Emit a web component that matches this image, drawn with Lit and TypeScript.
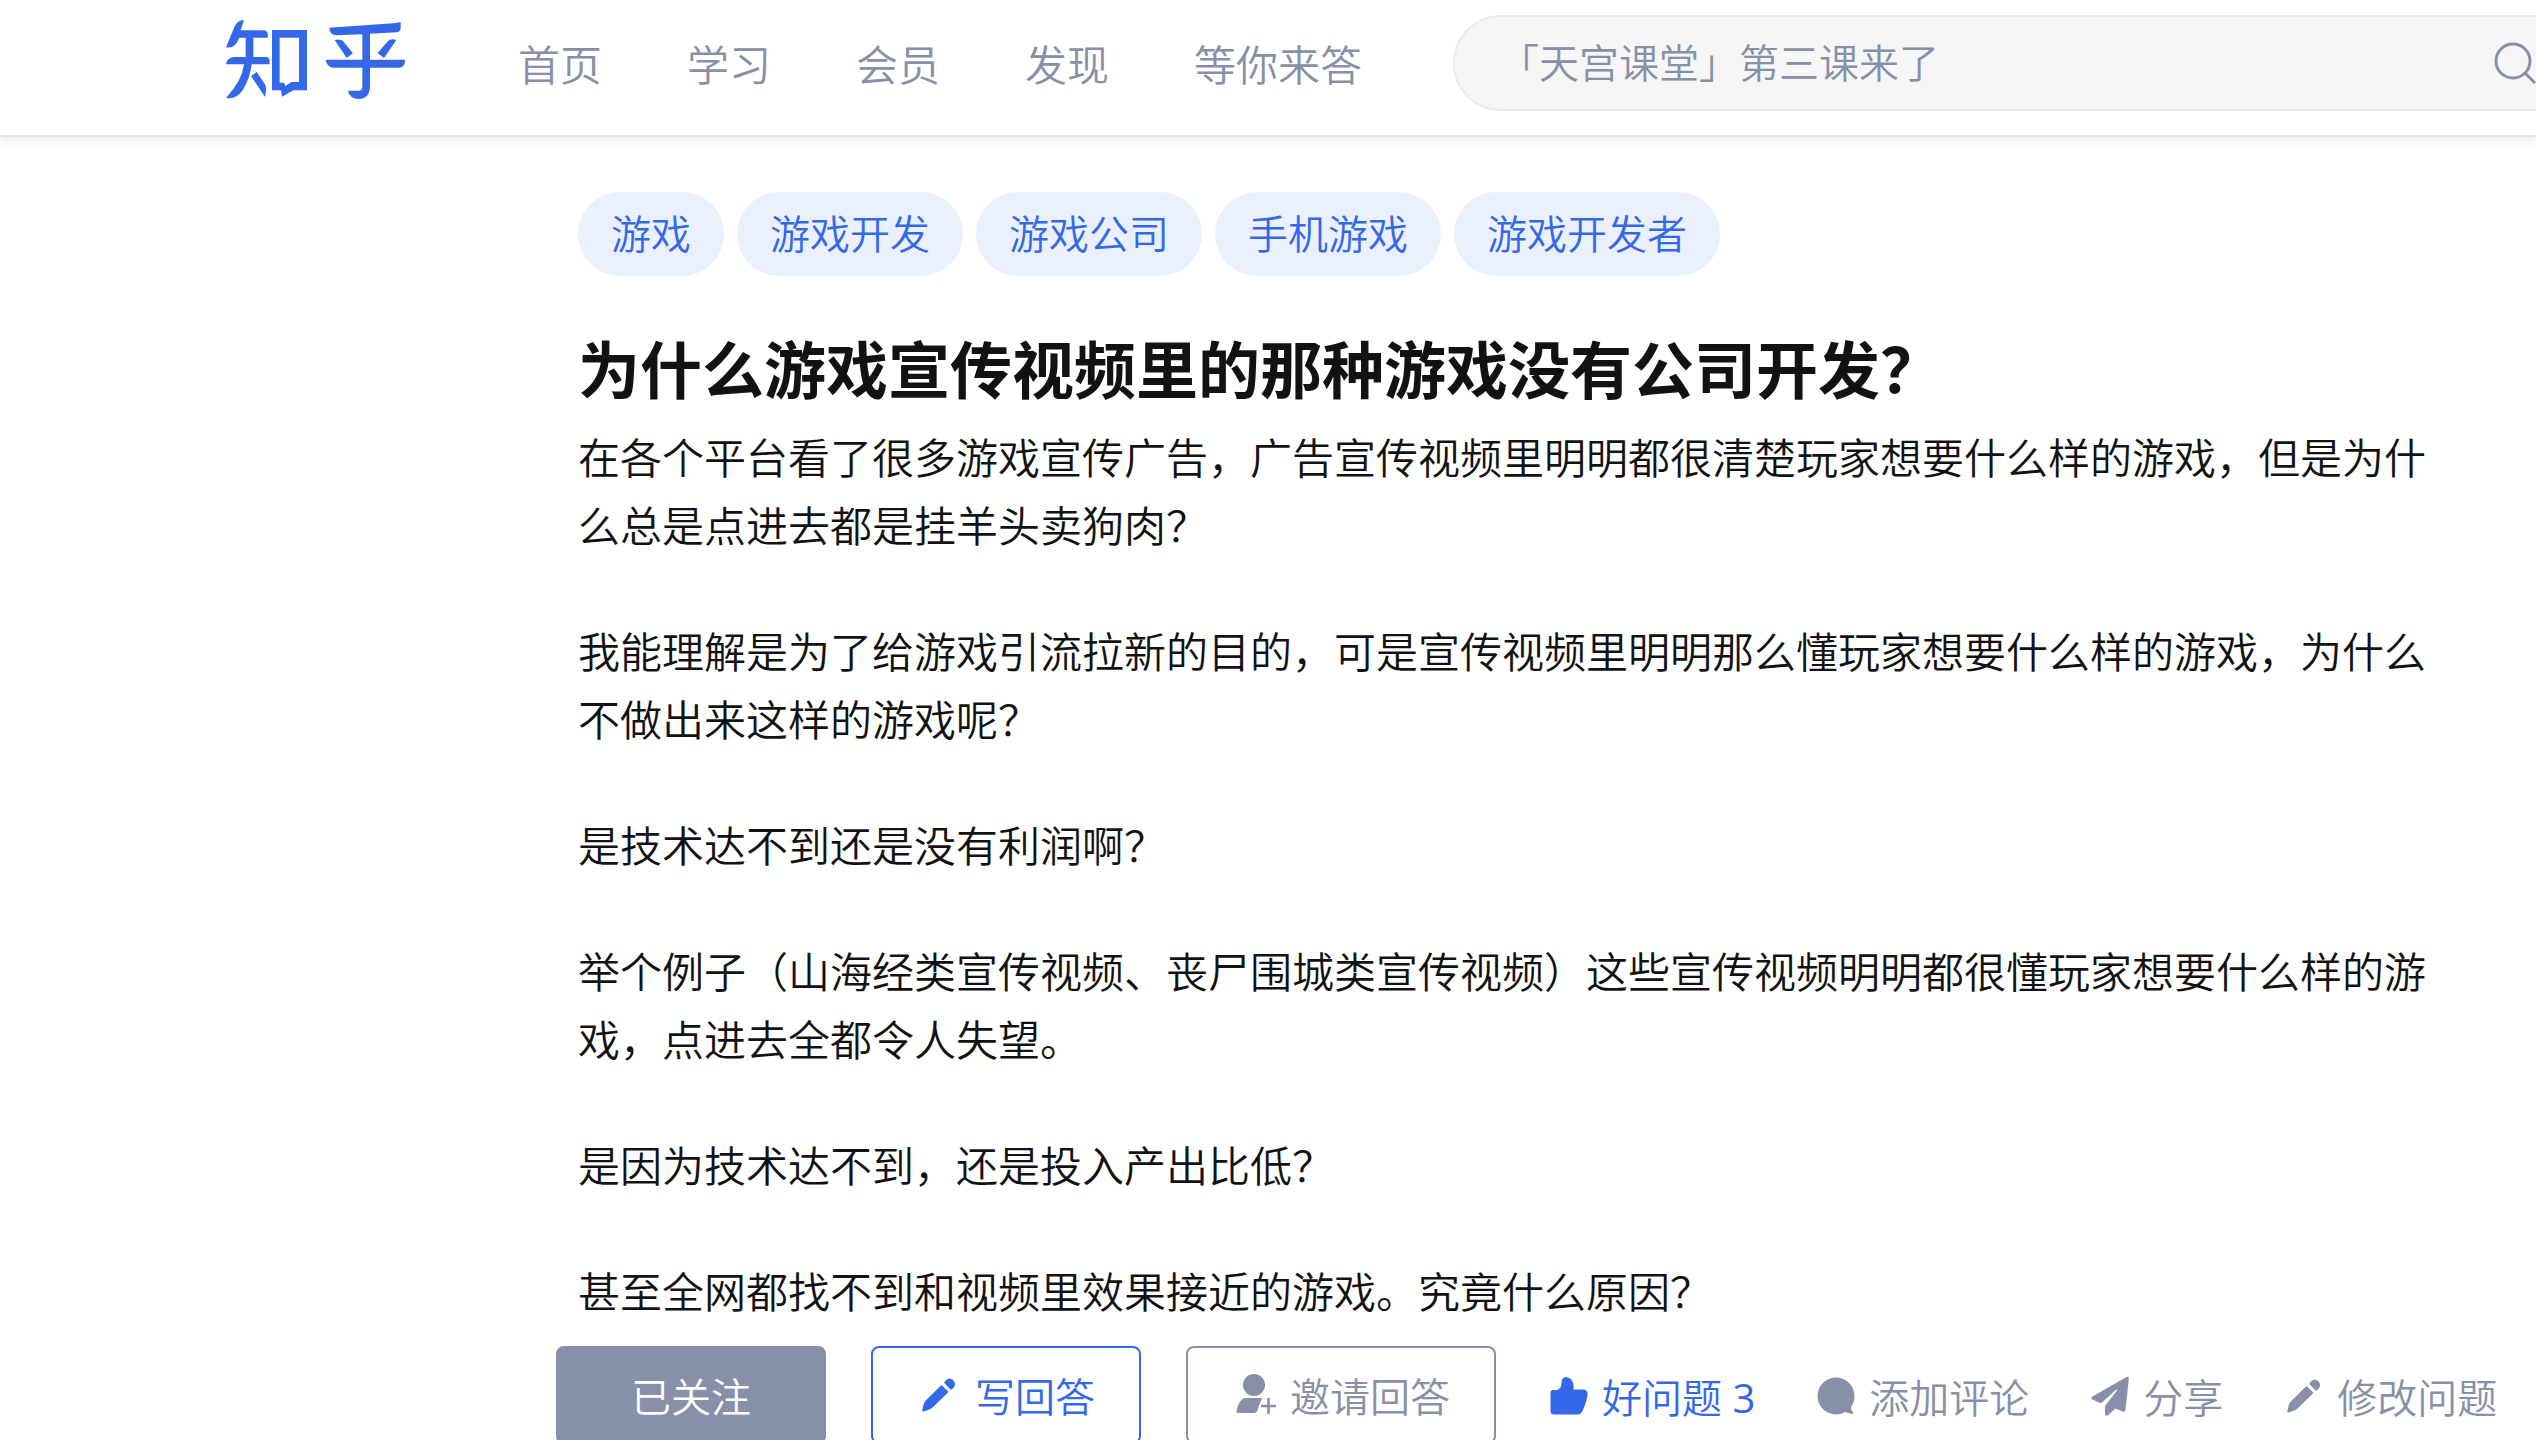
import { LitElement, html, css, svg } from "lit";
import { customElement } from "lit/decorators.js";

const logo = svg`<svg class="logo-mark" viewBox="75 54 546 246" aria-hidden="true">
  <path d="M132 57Q112 58 104 76L78 139Q102 142 112 122L118 110H137V168H102Q80 170 78 190H132Q126 240 78 291Q108 297 128 268Q150 232 155 190H208Q212 168 198 168H160V110H203Q206 88 192 88H122Z"/>
  <path d="M153 225L170 213L195 250Q201 262 195 288Z"/>
  <path fill-rule="evenodd" d="M216 87H321V268H280L246 287L243 268H216ZM239 110V245H252L256 255L275 243H297V110Z"/>
  <path d="M388 80L580 67Q592 66 602 63V82Q600 94 590 94L510 98V176H615Q616 200 595 200H510V262Q506 293 480 294Q448 294 444 269H475Q487 269 487 258V200H400Q380 198 377 176H487V100L410 103Q388 102 388 80Z"/>
  <path d="M404 117Q424 112 433 125L459 157L440 171Z"/>
  <path d="M589 117Q570 110 562 122L533 156L552 171Z"/>
</svg>`;

const pencil = svg`<svg class="icon" viewBox="0 0 40 40" aria-hidden="true">
  <path d="M23.300 10.800L28.900 16.200Q29.400 16.900 28.700 17.700L13.500 32.500Q11.500 34.300 9 35L4.500 36.500Q3 36.800 3.300 35.200L4.600 29.500Q5.300 27 7 25.200L21.500 10.900Q22.400 10.100 23.300 10.800Z"/>
  <path d="M26.300 6Q30 1.500 34 5Q37.800 8.800 34.700 12.600L33.300 14Q32.200 14.900 31 13.900L25.700 8.600Q24.900 7.500 25.700 6.700Z"/>
</svg>`;

const invite = svg`<svg class="icon" viewBox="0 0 44 44" aria-hidden="true">
  <circle cx="22" cy="12" r="11"/>
  <path d="M14.500 25H29Q30.500 25 29.500 27Q27 31 26 36Q25 40 22 40H6Q4 40 4.500 38Q5 33 8.500 28Q10.500 25 14.500 25Z"/>
  <path d="M36.500 25V41M29 33H44" fill="none" stroke="currentColor" stroke-width="2.600"/>
</svg>`;

const thumb = svg`<svg class="icon" viewBox="0 0 40 40" aria-hidden="true">
  <path d="M4 14H8Q12.500 12.500 12.500 7Q12.500 1 17.500 1Q23.500 2 24.500 9Q24.800 12 24.300 13.500H35Q39.500 14.500 38.500 20Q36.500 29 33.500 35Q31.500 39 28 38.500H5Q1.500 38.500 1.500 35V17Q1.500 14 4 14Z"/>
</svg>`;

const comment = svg`<svg class="icon" viewBox="0 0 40 40" aria-hidden="true">
  <path d="M20 1.500A18.500 18.500 0 0 1 38.500 20Q38.500 26 35.500 30Q34.500 32 35.500 34L37 36.500Q37.500 38 36 38L29 36Q25 38.500 20 38.500A18.500 18.500 0 0 1 20 1.500Z"/>
</svg>`;

const plane = svg`<svg class="icon" viewBox="0 0 40 40" aria-hidden="true">
  <path d="M36.500 1Q39 0 38.800 3L35.500 34Q35 36.500 32.500 35.500L25.500 32.500L17.500 39.500Q15 40.500 15 37.500V30L27 14.500Q27.500 13 26 13.700L12 26.500Q11 27.300 9.500 26.700L2.500 23.500Q0 22 2.500 20.500Z"/>
</svg>`;

const magnifier = svg`<svg class="search-icon" viewBox="0 0 44 44" aria-hidden="true">
  <circle cx="20" cy="20" r="17"/><path d="M32 32L42 42"/>
</svg>`;

const NAV = ["首页", "学习", "会员", "发现", "等你来答"];
const TOPICS = ["游戏", "游戏开发", "游戏公司", "手机游戏", "游戏开发者"];
const DETAIL = [
  "在各个平台看了很多游戏宣传广告，广告宣传视频里明明都很清楚玩家想要什么样的游戏，但是为什么总是点进去都是挂羊头卖狗肉？",
  "我能理解是为了给游戏引流拉新的目的，可是宣传视频里明明那么懂玩家想要什么样的游戏，为什么不做出来这样的游戏呢？",
  "是技术达不到还是没有利润啊？",
  "举个例子（山海经类宣传视频、丧尸围城类宣传视频）这些宣传视频明明都很懂玩家想要什么样的游戏，点进去全都令人失望。",
  "是因为技术达不到，还是投入产出比低？",
  "甚至全网都找不到和视频里效果接近的游戏。究竟什么原因？",
];

@customElement("app-root")
export class AppRoot extends LitElement {
  static styles = css`
    :host {
      --blue: #3468e8;
      --grey: #8790a8;
      display: block;
      height: 100vh;
      overflow: hidden;
      background: #fff;
      color: #121212;
      font-family: "Open Sans", "Noto Sans CJK SC", sans-serif;
      font-size: 40px;
      font-weight: 350;
    }
    * { box-sizing: border-box; }
    a { color: inherit; text-decoration: none; }
    button { font: inherit; color: inherit; background: none; border: 0; padding: 0; margin: 0; cursor: pointer; white-space: nowrap; }
    svg { fill: currentColor; flex: none; display: block; }
    .header {
      display: flex;
      align-items: center;
      height: 137px;
      padding: 0 0 10px 225px;
      border-bottom: 2px solid #e2e2e2;
      box-shadow: 0 3px 10px rgba(18, 18, 18, 0.1);
      color: var(--grey);
    }
    .logo { flex: none; color: var(--blue); margin-right: 111px; padding-bottom: 6px; }
    .logo-mark { width: 182px; height: 82px; }
    .nav { display: flex; flex: none; gap: 85px; padding-top: 4px; font-size: 42px; line-height: 60px; }
    .search {
      display: flex;
      flex: 1;
      align-items: center;
      height: 96px;
      margin: 0 -60px 0 91px;
      padding: 0 57px 0 44px;
      border: 2px solid #ebebeb;
      border-radius: 48px;
      background: #f6f6f6;
    }
    .search-input {
      flex: 1;
      min-width: 0;
      border: 0;
      padding: 0;
      outline: none;
      background: none;
      color: var(--grey);
      font: inherit;
    }
    .search-input::placeholder { color: var(--grey); opacity: 1; }
    .search-icon { width: 44px; height: 44px; fill: none; stroke: currentColor; stroke-width: 3; }
    .question { padding: 55px 102px 0 556px; }
    .content { padding-left: 22px; }
    .topics { display: flex; gap: 13px; margin: 0; padding: 0; list-style: none; }
    .topic {
      display: block;
      padding: 0 33px;
      border-radius: 42px;
      background: #ebf0fe;
      color: var(--blue);
      line-height: 84px;
    }
    .title { margin: 50px 0 10px; font-size: 62px; line-height: 88px; font-weight: 700; }
    .detail { display: grid; gap: 58px; font-size: 42px; line-height: 68px; }
    .paragraph { margin: 0; }
    .actions { display: flex; align-items: center; margin-top: 20px; color: var(--grey); }
    .buttons { display: flex; gap: 45px; margin-right: 53px; }
    .button {
      display: flex;
      align-items: center;
      justify-content: center;
      gap: 14px;
      min-width: 270px;
      height: 98px;
      padding: 0 44px;
      border: 2px solid currentColor;
      border-radius: 8px;
    }
    .following { background: var(--grey); border-color: var(--grey); color: #fff; }
    .write, .like { color: var(--blue); }
    .links { display: flex; gap: 61px; padding-top: 2px; }
    .link { display: flex; align-items: center; gap: 13px; }
    .count { font-weight: 500; }
    .icon { width: 40px; height: 40px; }
    .button .icon { width: 44px; height: 44px; }
    .button.write .icon { height: 40px; }
  `;

  render() {
    return html`
      <header class="header">
        <a class="logo" href="#" aria-label="知乎">${logo}</a>
        <nav class="nav">${NAV.map((n) => html`<a href="#">${n}</a>`)}</nav>
        <form class="search" role="search">
          <input class="search-input" type="text" aria-label="搜索" placeholder="「天宫课堂」第三课来了" />
          <button type="button" aria-label="搜索">${magnifier}</button>
        </form>
      </header>
      <main class="question">
        <div class="content">
          <ul class="topics">${TOPICS.map((t) => html`<li><a class="topic" href="#">${t}</a></li>`)}</ul>
          <h1 class="title">为什么游戏宣传视频里的那种游戏没有公司开发？</h1>
          <div class="detail">${DETAIL.map((p) => html`<p class="paragraph">${p}</p>`)}</div>
        </div>
        <div class="actions">
          <div class="buttons">
            <button class="button following">已关注</button>
            <button class="button write">${pencil}写回答</button>
            <button class="button">${invite}邀请回答</button>
          </div>
          <div class="links">
            <button class="link like">${thumb}<span>好问题 <span class="count">3</span></span></button>
            <button class="link">${comment}添加评论</button>
            <button class="link">${plane}分享</button>
            <button class="link">${pencil}修改问题</button>
          </div>
        </div>
      </main>
    `;
  }
}
